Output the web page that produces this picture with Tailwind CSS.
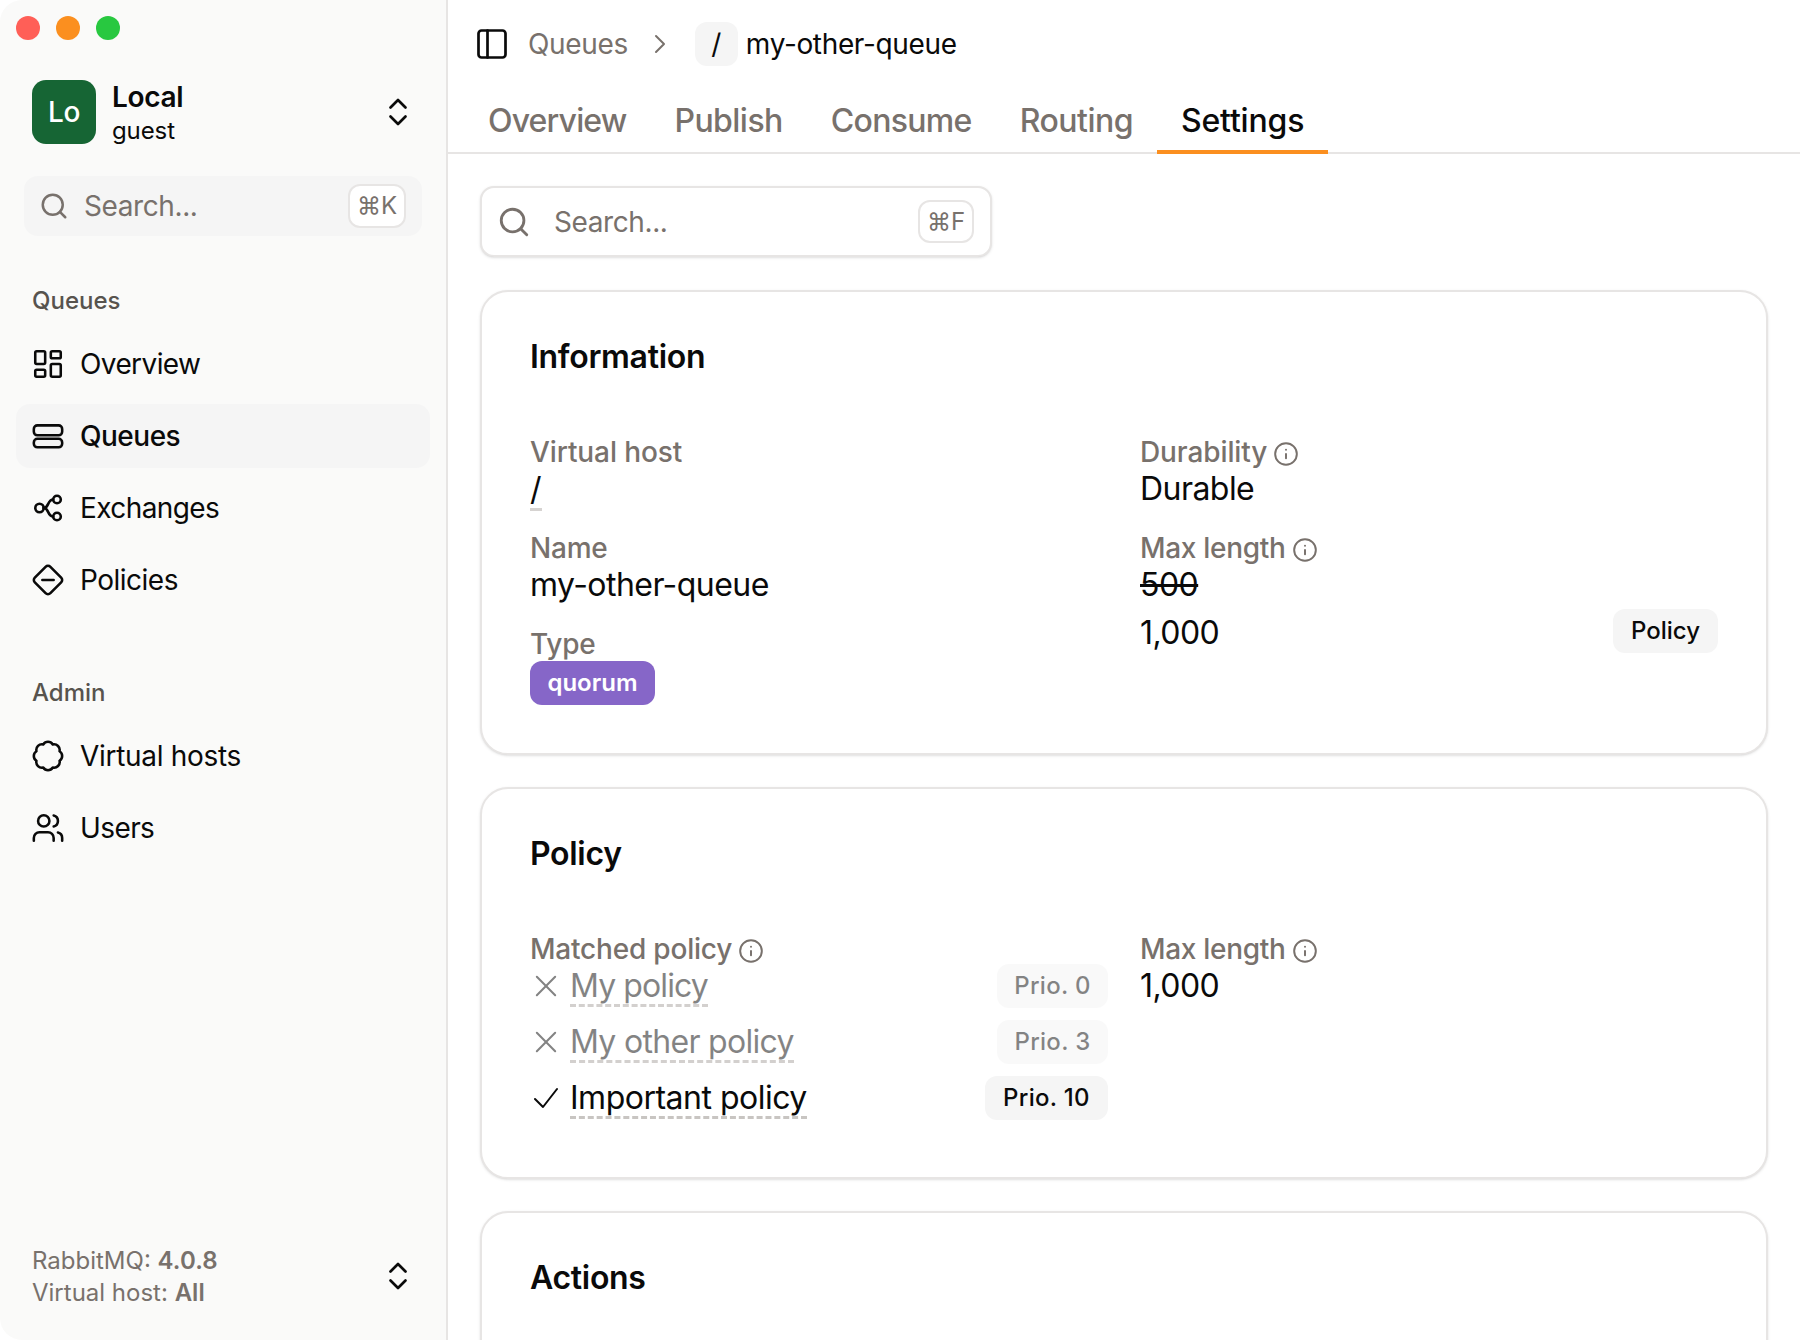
<!DOCTYPE html>
<html lang="en">
<head>
    <meta charset="UTF-8">
    <title>Queue settings</title>
    <script src="https://cdn.jsdelivr.net/npm/@tailwindcss/browser@4"></script>
</head>
<body class="bg-white font-['Inter','DejaVu_Sans',sans-serif] text-[#0a0a0a]">
<div class="flex w-[1800px] h-[1340px] overflow-hidden">

    <!-- Sidebar -->
    <aside class="flex flex-col w-[448px] shrink-0 h-full px-4 bg-[#fafaf9] border-r-2 border-[#e7e5e4] rounded-l-[22px]">
        <div class="flex gap-4 h-6 mt-4 shrink-0">
            <span class="w-6 h-6 rounded-full bg-[#ff5f57]"></span>
            <span class="w-6 h-6 rounded-full bg-[#fb8f1f]"></span>
            <span class="w-6 h-6 rounded-full bg-[#28c840]"></span>
        </div>

        <div class="flex items-center h-16 mt-10 pl-4 shrink-0">
            <div class="flex items-center justify-center w-16 h-16 rounded-[14px] bg-[#166534] text-white text-[28px] font-medium tracking-[-0.4px]">Lo</div>
            <div class="ml-4 pt-[2px] flex flex-col">
                <span class="text-[28px] leading-[36px] font-semibold tracking-[-0.3px]">Local</span>
                <span class="text-[24px] leading-[32px] tracking-[-0.1px]">guest</span>
            </div>
            <svg class="ml-auto mr-[14px] w-9 h-9" viewBox="0 0 24 24" fill="none" stroke="currentColor" stroke-width="1.8" stroke-linecap="round" stroke-linejoin="round"><path d="m7 15 5 5 5-5"/><path d="m7 9 5-5 5 5"/></svg>
        </div>

        <div class="flex items-center h-[60px] w-[398px] mx-2 mt-8 pl-[15px] pr-[16px] rounded-[14px] bg-[#f5f5f5] text-[#78716c] shrink-0">
            <svg class="w-[30px] h-[30px] shrink-0" viewBox="0 0 24 24" fill="none" stroke="currentColor" stroke-width="2" stroke-linecap="round" stroke-linejoin="round"><circle cx="11" cy="11" r="8"/><path d="m21 21-4.3-4.3"/></svg>
            <span class="ml-[15px] text-[28px] tracking-[-0.4px]">Search...</span>
            <span class="ml-auto flex items-center justify-center w-[58px] h-11 rounded-[12px] bg-white border-2 border-[#e7e5e4] text-[24px]">⌘K</span>
        </div>

        <div class="h-9 mt-[47px] mb-[13px] pl-4 text-[24px] leading-[36px] font-medium text-[#57534e]">Queues</div>
        <nav class="flex flex-col gap-2">
            <a class="flex items-center h-16 pl-[15px] gap-[15px] text-[28px] tracking-[-0.6px]">
                <svg class="w-[34px] h-[34px]" viewBox="0 0 24 24" fill="none" stroke="currentColor" stroke-width="1.8" stroke-linecap="round" stroke-linejoin="round"><rect width="7" height="9" x="3" y="3" rx="1"/><rect width="7" height="5" x="14" y="3" rx="1"/><rect width="7" height="9" x="14" y="12" rx="1"/><rect width="7" height="5" x="3" y="16" rx="1"/></svg>
                Overview
            </a>
            <a class="flex items-center h-16 pl-[15px] gap-[15px] text-[28px] font-medium tracking-[-0.5px] rounded-[14px] bg-[#f5f5f5]">
                <svg class="w-[34px] h-[34px]" viewBox="0 0 24 24" fill="none" stroke="currentColor" stroke-width="1.8" stroke-linecap="round" stroke-linejoin="round"><rect width="20" height="7" x="2" y="4.500" rx="2.500"/><rect width="20" height="6" x="2" y="14" rx="2.500"/></svg>
                Queues
            </a>
            <a class="flex items-center h-16 pl-[15px] gap-[15px] text-[28px] tracking-[-0.6px]">
                <svg class="w-[34px] h-[34px]" viewBox="0 0 34 34" fill="none" stroke="currentColor" stroke-width="2.600" stroke-linecap="round" stroke-linejoin="round"><circle cx="8.500" cy="17" r="4.200"/><circle cx="26" cy="8.500" r="3.800"/><circle cx="26" cy="25.500" r="3.800"/><path d="M22.200 8.500c-6 0-4 8.500-9.500 8.500"/><path d="M22.200 25.500c-6 0-4-8.500-9.500-8.500"/></svg>
                Exchanges
            </a>
            <a class="flex items-center h-16 pl-[15px] gap-[15px] text-[28px] tracking-[-0.5px]">
                <svg class="w-[34px] h-[34px]" viewBox="0 0 24 24" fill="none" stroke="currentColor" stroke-width="1.8" stroke-linecap="round" stroke-linejoin="round"><path d="M2.700 10.300a2.410 2.410 0 0 0 0 3.410l7.590 7.590a2.410 2.410 0 0 0 3.410 0l7.590-7.590a2.410 2.410 0 0 0 0-3.410L13.700 2.710a2.410 2.410 0 0 0-3.410 0z"/><path d="M8 12h8"/></svg>
                Policies
            </a>
        </nav>

        <div class="h-9 mt-[63px] mb-[13px] pl-4 text-[24px] leading-[36px] font-medium text-[#57534e]">Admin</div>
        <nav class="flex flex-col gap-2">
            <a class="flex items-center h-16 pl-[15px] gap-[15px] text-[28px] tracking-[-0.3px]">
                <svg class="w-[34px] h-[34px]" viewBox="0 0 24 24" fill="none" stroke="currentColor" stroke-width="1.8" stroke-linecap="round" stroke-linejoin="round"><path d="M3.850 8.620a4 4 0 0 1 4.780-4.770 4 4 0 0 1 6.740 0 4 4 0 0 1 4.780 4.780 4 4 0 0 1 0 6.740 4 4 0 0 1-4.770 4.780 4 4 0 0 1-6.750 0 4 4 0 0 1-4.780-4.770 4 4 0 0 1 0-6.760Z"/></svg>
                Virtual hosts
            </a>
            <a class="flex items-center h-16 pl-[15px] gap-[15px] text-[28px] tracking-[-0.6px]">
                <svg class="w-[34px] h-[34px]" viewBox="0 0 24 24" fill="none" stroke="currentColor" stroke-width="1.8" stroke-linecap="round" stroke-linejoin="round"><path d="M16 21v-2a4 4 0 0 0-4-4H6a4 4 0 0 0-4 4v2"/><circle cx="9" cy="7" r="4"/><path d="M22 21v-2a4 4 0 0 0-3-3.870"/><path d="M16 3.130a4 4 0 0 1 0 7.750"/></svg>
                Users
            </a>
        </nav>

        <div class="flex items-center mt-auto mb-8 pl-4 h-16 text-[24px] leading-[32px] text-[#78716c]">
            <div class="pt-[2px]">
                <div>RabbitMQ: <b class="font-semibold tracking-[0.1px]">4.0.8</b></div>
                <div>Virtual host: <b class="font-semibold">All</b></div>
            </div>
            <svg class="ml-auto mr-[14px] w-9 h-9 text-[#0a0a0a]" viewBox="0 0 24 24" fill="none" stroke="currentColor" stroke-width="1.8" stroke-linecap="round" stroke-linejoin="round"><path d="m7 15 5 5 5-5"/><path d="m7 9 5-5 5 5"/></svg>
        </div>
    </aside>

    <!-- Main -->
    <main class="flex-1 min-w-0 h-full overflow-hidden">
        <header class="flex items-center h-[44px] mt-[22px] pl-[26px]">
            <svg class="w-9 h-9" viewBox="0 0 24 24" fill="none" stroke="currentColor" stroke-width="1.8" stroke-linecap="round" stroke-linejoin="round"><rect width="18" height="18" x="3" y="3" rx="2"/><path d="M9 3v18"/></svg>
            <span class="ml-[18px] text-[28px] tracking-[-0.35px] text-[#78716c]">Queues</span>
            <svg class="ml-[16px] w-8 h-8 text-[#78716c]" viewBox="0 0 24 24" fill="none" stroke="currentColor" stroke-width="1.500" stroke-linecap="round" stroke-linejoin="round"><path d="m9 18 6-6-6-6"/></svg>
            <span class="ml-[19px] flex items-center justify-center w-[43px] h-[44px] rounded-[12px] bg-[#f5f5f5] text-[28px]">/</span>
            <span class="ml-2 text-[28px] tracking-[-0.35px]">my-other-queue</span>
        </header>

        <div class="flex h-[88px] pl-4 border-b-2 border-[#e7e5e4]">
            <a class="flex items-center px-6 pt-[21px] text-[32px] font-medium tracking-[-0.85px] text-[#78716c] h-[88px]">Overview</a>
            <a class="flex items-center px-6 pt-[21px] text-[32px] font-medium tracking-[-0.55px] text-[#78716c] h-[88px]">Publish</a>
            <a class="flex items-center px-6 pt-[21px] text-[32px] font-medium tracking-[-0.7px] text-[#78716c] h-[88px]">Consume</a>
            <a class="flex items-center px-6 pt-[21px] text-[32px] font-medium tracking-[-0.5px] text-[#78716c] h-[88px]">Routing</a>
            <a class="flex items-center px-6 pt-[25px] text-[32px] font-medium tracking-[-0.2px] h-[88px] border-b-4 border-[#fb8f1f]">Settings</a>
        </div>

        <div class="flex flex-col gap-8 px-8 pt-[32px]">
            <div class="flex items-center w-[512px] h-[71px] pl-[15px] pr-[16px] bg-white border-2 border-[#e7e5e4] rounded-[14px] shadow-sm text-[#78716c]">
                <svg class="w-[34px] h-[34px] shrink-0" viewBox="0 0 24 24" fill="none" stroke="currentColor" stroke-width="2" stroke-linecap="round" stroke-linejoin="round"><circle cx="11" cy="11" r="8"/><path d="m21 21-4.3-4.3"/></svg>
                <span class="ml-[23px] text-[28px] tracking-[-0.4px]">Search...</span>
                <span class="ml-auto flex items-center justify-center w-[56px] h-[43px] rounded-[12px] bg-white border-2 border-[#e7e5e4] text-[24px]">⌘F</span>
            </div>

            <!-- Information -->
            <section class="h-[465px] mt-px p-12 bg-white border-2 border-[#e7e5e4] rounded-[28px] shadow-sm">
                <h2 class="h-[34px] mb-[60px] text-[32px] leading-[34px] font-semibold tracking-[-0.3px]">Information</h2>
                <div class="grid grid-cols-[610px_1fr] gap-y-5">
                    <div>
                        <div class="h-[35px] text-[28px] leading-9 font-medium tracking-[-0.1px] text-[#78716c]">Virtual host</div>
                        <div class="h-[41px] text-[32px] leading-10"><span class="border-b-[3px] border-dashed border-[#d6d3d1]">/</span></div>
                    </div>
                    <div>
                        <div class="flex items-center gap-[6px] h-[35px] text-[28px] font-medium tracking-[-0.1px] text-[#78716c]">Durability
                            <svg class="w-[26px] h-[26px] mt-1" viewBox="0 0 24 24" fill="none" stroke="currentColor" stroke-width="1.800" stroke-linecap="round" stroke-linejoin="round"><circle cx="12" cy="12" r="10"/><path d="M12 16v-4"/><path d="M12 8h.01"/></svg>
                        </div>
                        <div class="h-[41px] text-[32px] leading-10 tracking-[-0.55px]">Durable</div>
                    </div>
                    <div>
                        <div class="h-[35px] text-[28px] leading-9 font-medium tracking-[-0.2px] text-[#78716c]">Name</div>
                        <div class="h-[41px] text-[32px] leading-10 tracking-[-0.55px]">my-other-queue</div>
                    </div>
                    <div class="row-span-2">
                        <div class="flex items-center gap-[6px] h-[35px] text-[28px] font-medium tracking-[-0.3px] text-[#78716c]">Max length
                            <svg class="w-[26px] h-[26px] mt-1" viewBox="0 0 24 24" fill="none" stroke="currentColor" stroke-width="1.800" stroke-linecap="round" stroke-linejoin="round"><circle cx="12" cy="12" r="10"/><path d="M12 16v-4"/><path d="M12 8h.01"/></svg>
                        </div>
                        <div class="h-[41px] text-[32px] leading-10 tracking-[-0.55px] line-through">500</div>
                        <div class="flex items-center justify-between mt-[3px] h-11">
                            <span class="text-[32px] leading-10 tracking-[-0.55px] mt-1">1,000</span>
                            <span class="flex items-center h-11 px-[18px] rounded-[12px] bg-[#f5f5f5] text-[24px] font-medium">Policy</span>
                        </div>
                    </div>
                    <div>
                        <div class="h-[35px] text-[28px] leading-9 font-medium tracking-[-0.2px] text-[#78716c]">Type</div>
                        <span class="flex items-center justify-center w-[125px] h-11 rounded-[12px] bg-[#8666c8] text-white text-[24px] font-semibold">quorum</span>
                    </div>
                </div>
            </section>

            <!-- Policy -->
            <section class="h-[392px] p-12 bg-white border-2 border-[#e7e5e4] rounded-[28px] shadow-sm">
                <h2 class="h-[34px] mb-[60px] text-[32px] leading-[34px] font-semibold tracking-[-0.3px]">Policy</h2>
                <div class="grid grid-cols-[610px_1fr]">
                    <div>
                        <div class="flex items-center gap-[6px] h-9 text-[28px] font-medium tracking-[-0.2px] text-[#78716c]">Matched policy
                            <svg class="w-[26px] h-[26px] mt-1" viewBox="0 0 24 24" fill="none" stroke="currentColor" stroke-width="1.800" stroke-linecap="round" stroke-linejoin="round"><circle cx="12" cy="12" r="10"/><path d="M12 16v-4"/><path d="M12 8h.01"/></svg>
                        </div>
                        <div class="flex flex-col gap-3 -mt-[3px] pr-[32px]">
                            <div class="flex items-center h-11 opacity-50">
                                <svg class="w-[22px] h-[22px] ml-[5px]" viewBox="0 0 24 24" fill="none" stroke="currentColor" stroke-width="2.200" stroke-linecap="round"><path d="M2 2l20 20"/><path d="M22 2L2 22"/></svg>
                                <span class="ml-[13px] text-[32px] leading-[37px] tracking-[-0.9px] border-b-[3px] border-dashed border-[#a8a29e] mt-[2px]">My policy</span>
                                <span class="ml-auto flex items-center justify-center w-[111px] h-11 rounded-[12px] bg-[#f5f5f5] text-[24px] font-medium tracking-[0.3px]">Prio. 0</span>
                            </div>
                            <div class="flex items-center h-11 opacity-50">
                                <svg class="w-[22px] h-[22px] ml-[5px]" viewBox="0 0 24 24" fill="none" stroke="currentColor" stroke-width="2.200" stroke-linecap="round"><path d="M2 2l20 20"/><path d="M22 2L2 22"/></svg>
                                <span class="ml-[13px] text-[32px] leading-[37px] tracking-[-0.7px] border-b-[3px] border-dashed border-[#a8a29e] mt-[2px]">My other policy</span>
                                <span class="ml-auto flex items-center justify-center w-[111px] h-11 rounded-[12px] bg-[#f5f5f5] text-[24px] font-medium tracking-[0.3px]">Prio. 3</span>
                            </div>
                            <div class="flex items-center h-11">
                                <svg class="w-[24px] h-[24px] ml-[4px]" viewBox="0 0 24 24" fill="none" stroke="currentColor" stroke-width="2" stroke-linecap="round" stroke-linejoin="round"><path d="M23 3 9 21 1 13"/></svg>
                                <span class="ml-[12px] text-[32px] leading-[37px] tracking-[-0.5px] border-b-[3px] border-dashed border-[#c8c5c2] mt-[2px]">Important policy</span>
                                <span class="ml-auto flex items-center justify-center w-[123px] h-11 rounded-[12px] bg-[#f5f5f5] text-[24px] font-medium tracking-[0.3px]">Prio. 10</span>
                            </div>
                        </div>
                    </div>
                    <div>
                        <div class="flex items-center gap-[6px] h-[35px] text-[28px] font-medium tracking-[-0.3px] text-[#78716c]">Max length
                            <svg class="w-[26px] h-[26px] mt-1" viewBox="0 0 24 24" fill="none" stroke="currentColor" stroke-width="1.800" stroke-linecap="round" stroke-linejoin="round"><circle cx="12" cy="12" r="10"/><path d="M12 16v-4"/><path d="M12 8h.01"/></svg>
                        </div>
                        <div class="h-[41px] text-[32px] leading-10 tracking-[-0.55px]">1,000</div>
                    </div>
                </div>
            </section>

            <!-- Actions -->
            <section class="h-[300px] p-12 bg-white border-2 border-[#e7e5e4] rounded-[28px] shadow-sm">
                <h2 class="h-[34px] text-[32px] leading-[34px] font-semibold tracking-[-0.3px]">Actions</h2>
            </section>
        </div>
    </main>
</div>
</body>
</html>
